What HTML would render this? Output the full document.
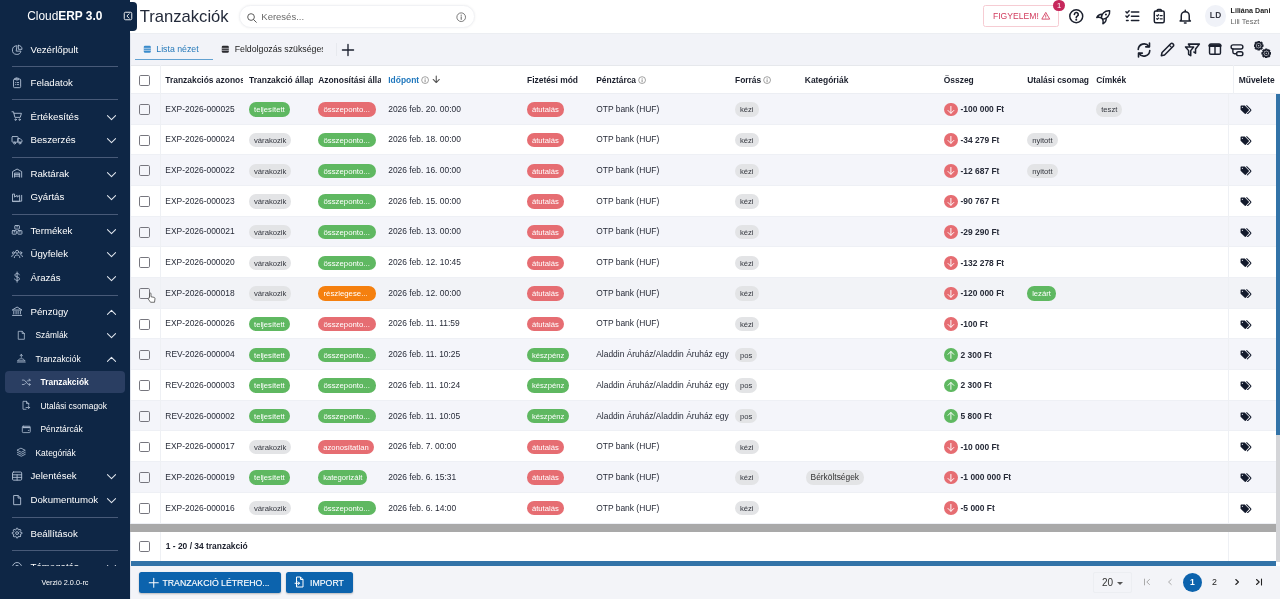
<!DOCTYPE html>
<html lang="hu"><head><meta charset="utf-8"><title>Tranzakciók</title>
<style>
*{box-sizing:border-box;margin:0;padding:0}
html,body{width:1280px;height:599px;overflow:hidden;background:#fff;font-family:"Liberation Sans",sans-serif;color:#222}
svg{display:block}
#app{position:absolute;left:0;top:0;width:1280px;height:599px;overflow:hidden;will-change:transform}
#side{position:absolute;left:0;top:0;width:129.500px;height:599px;background:#0e2645;overflow:hidden;color:#fff}
#side .logo{position:absolute;left:0;top:9.300px;width:129.500px;text-align:center;font-size:11.900px;color:#fff;letter-spacing:0}
#side .sl{position:absolute;white-space:nowrap;line-height:14px;color:#fff}
#side .ver{position:absolute;left:0;bottom:0;width:130px;height:33.500px;background:#0e2645;text-align:center;font-size:7.300px;line-height:33px;color:#fff}
#coll{position:absolute;left:120px;top:2px;width:17px;height:28.500px;background:#0e2645;border-radius:0 4px 4px 0;padding:9.200px 0 0 2.500px}
#head{position:absolute;left:130px;top:0;width:1150px;height:33px;background:#fff}
#head>*{position:absolute}
.title{left:9.800px;top:6.700px;font-size:16.600px;line-height:20px;color:#232a3a;white-space:nowrap}
.search{left:108.800px;top:4.900px;width:236.200px;height:23.300px;border-radius:12px;border:1px solid #f1f2f5;box-shadow:0 0 2.500px rgba(0,0,0,.055);background:#fff}
.search .ph{position:absolute;left:21.500px;top:4px;font-size:9.500px;line-height:13px;color:#6a6a6a}
.warn{left:853.200px;top:5.300px;width:75.800px;height:21.600px;border:1px solid #f6ccd3;border-radius:2.500px;color:#d23c5e;font-size:8.600px}
.warn span{position:absolute;left:8.800px;top:5px;line-height:10px;white-space:nowrap}
.badge{left:923.3000000000001px;top:-0.400px;width:11.800px;height:11.800px;border-radius:6px;background:#c6285c;color:#fff;font-size:7.600px;text-align:center;line-height:12px}
.avatar{left:1075.0px;top:5.400000000000002px;width:21.400px;height:21.400px;border-radius:50%;background:#f0f2f8;color:#383a45;font-size:8.300px;font-weight:bold;letter-spacing:0.300px;text-align:center;line-height:21.400px}
.uname{left:1100.6px;top:6px;font-size:7.100px;font-weight:bold;line-height:10px;color:#222;white-space:nowrap}
.urole{left:1100.6px;top:16.800px;font-size:7.500px;line-height:10px;color:#666;white-space:nowrap}
#tabs{position:absolute;left:130px;top:33px;width:1150px;height:32.300px;background:#f2f3f8;box-shadow:inset 0 1px 0 #eceef2}
#tabs>*{position:absolute}
.tab1{left:26.300px;top:9.500px;font-size:8.760px;line-height:13px;color:#2478b9;white-space:nowrap}
.tab2{left:104.700px;top:9.500px;width:88.300px;overflow:hidden;font-size:8.760px;line-height:13px;color:#222;white-space:nowrap}
.uline{left:4.600px;top:25.600px;width:78.400px;height:1.600px;background:#62a1d1}
#tbl{position:absolute;left:130px;top:65.3px;width:1150px;height:500.49999999999994px;background:#fff;overflow:hidden}
#tbl>*{position:absolute}
.row{left:0;width:1146.3px;height:30.68px;box-shadow:inset 0 -1px 0 #eef0f5}
.c,.h{white-space:nowrap;overflow:hidden;font-size:8.440px;line-height:14px;height:14px;color:#272b38}
.h{font-weight:bold;color:#1b1f2c}
.c{overflow:visible}
.c[style]{}
.cb{width:10.800px;height:10.800px;border:1.600px solid #76767e;border-radius:1.700px}
.vs{width:1px;background:#eef0f4}
.chip{display:inline-block;vertical-align:top;height:14.400px;line-height:15.400px;margin-top:0.500px;border-radius:7.200px;padding:0 4.950px;font-size:7.670px;white-space:nowrap}
.chip.ell{width:57.800px;padding:0 0 0 5.300px;font-size:7.800px;overflow:hidden}
.chip.big{font-size:8.400px;padding:0 4.700px;margin-left:1.100px}
.inf{display:inline-block;vertical-align:-0.900px;margin-left:1.800px}
.circ{display:inline-block;vertical-align:top;width:13.800px;height:13.800px;border-radius:50%;margin-top:0.800px}
.amt{display:inline-block;vertical-align:top;margin-left:3px;position:relative;top:0.500px}
#bot{position:absolute;left:130px;top:565.800px;width:1150px;height:33.200px;background:#f3f4f8}
#bot>*{position:absolute}
.btn{top:6.200px;height:21px;background:#0c63ad;border-radius:2.500px;color:#fff;font-size:8.720px;line-height:14px;white-space:nowrap;box-shadow:0 1px 2px rgba(0,0,0,.25);-webkit-text-stroke:0.120px #fff}
.psel{left:963.4000000000001px;top:5.800px;width:38.200px;height:21.400px;border:1px solid #eceef2;border-radius:2px}
.psel span{position:absolute;left:7.500px;top:4px;font-size:10px;line-height:12px;color:#333}
.psel i{position:absolute;left:23px;top:9px;border:3px solid transparent;border-top:3.500px solid #555;border-bottom:0}
.pg{top:11.700px}
.p1{left:1052.6499999999999px;top:7.050000000000045px;width:19.300px;height:19.300px;border-radius:50%;background:#0c63ad;color:#fff;font-size:8.500px;font-weight:bold;text-align:center;line-height:19.300px}
.p2{left:1078.5px;top:9.700000000000045px;width:12px;text-align:center;font-size:8.800px;line-height:14px;color:#222}
</style></head>
<body>
<div id="app">

<div id="head">
  <div class="title">Tranzakciók</div>
  <div class="search">
    <svg style="position:absolute;left:6.500px;top:5.800px" width="11.500" height="11.500" viewBox="0 0 24 24"><circle cx="10.500" cy="10.500" r="7" fill="none" stroke="#555" stroke-width="2"/><path d="M16 16l5.500 5.500" stroke="#555" stroke-width="2" stroke-linecap="round"/></svg>
    <span class="ph">Keresés...</span>
    <svg style="position:absolute;right:7.200px;top:6.300px" width="10.400" height="10.400" viewBox="0 0 24 24"><circle cx="12" cy="12" r="10" fill="none" stroke="#666" stroke-width="2"/><path d="M12 11v6" stroke="#666" stroke-width="2.400" stroke-linecap="round"/><circle cx="12" cy="7.300" r="1.400" fill="#666"/></svg>
  </div>
  <div class="warn"><span>FIGYELEM!</span>
    <svg style="position:absolute;left:57.300px;top:4.600px" width="9.500" height="9.500" viewBox="0 0 24 24"><path d="M12 3.500 22 20.500H2z" fill="none" stroke="#d23c5e" stroke-width="2.200" stroke-linejoin="round"/><path d="M12 10v5" stroke="#d23c5e" stroke-width="2.200" stroke-linecap="round"/><circle cx="12" cy="17.800" r="1.200" fill="#d23c5e"/></svg>
  </div>
  <div class="badge">1</div>
  <div style="position:absolute;left:937.55px;top:8.25px;width:16.5px;height:16.5px"><svg class="" width="16.5" height="16.5" viewBox="0 0 24 24" style=""><g fill="none" stroke="#1b202e" stroke-width="2.150" stroke-linecap="round" stroke-linejoin="round"><circle cx="12" cy="12" r="9.400"/><path d="M9.300 9.400a2.800 2.800 0 1 1 4.200 2.400c-1 .600-1.500 1.100-1.500 2.200" stroke-width="2.400"/></g><circle cx="12" cy="17.200" r="1.450" fill="#1b202e"/></svg></div>
  <div style="position:absolute;left:965.25px;top:8.55px;width:16.5px;height:16.5px"><svg class="" width="16.5" height="16.5" viewBox="0 0 24 24" style=""><g fill="none" stroke="#1b202e" stroke-width="2.150" stroke-linecap="round" stroke-linejoin="round"><path d="M21.300 2.700C14.500 1.800 8.800 7.500 9.300 12.900L11.100 14.700C16.500 15.200 22.200 9.500 21.300 2.700Z"/><path d="M10 7.700C6.500 7.600 4 9.600 2.600 12.500C5.500 11.800 7.800 12.200 9.300 12.900"/><path d="M16.300 14C16.400 17.500 14.400 20 11.500 21.400C12.200 18.500 11.800 16.200 11.100 14.700"/></g><circle cx="15.900" cy="8.100" r="1.500" fill="#1b202e"/></svg></div>
  <div style="position:absolute;left:994.05px;top:8.05px;width:16.5px;height:16.5px"><svg class="" width="16.5" height="16.5" viewBox="0 0 24 24" style=""><g fill="none" stroke="#1b202e" stroke-width="2.150" stroke-linecap="round" stroke-linejoin="round" stroke-width="2.500"><path d="M10.800 5.800H21.500M10.800 12H21.500M10.800 18.200H21.500"/><path d="M2.800 5.600l1.700 1.700 3-3.300M2.800 11.800l1.700 1.700 3-3.300" stroke-width="2.100"/><path d="M3.600 18.200h2.400"/></g></svg></div>
  <div style="position:absolute;left:1020.6500000000001px;top:8.350000000000001px;width:16.5px;height:16.5px"><svg class="" width="16.5" height="16.5" viewBox="0 0 24 24" style=""><g fill="none" stroke="#1b202e" stroke-width="2.150" stroke-linecap="round" stroke-linejoin="round"><rect x="4.800" y="4.200" width="14.400" height="17.300" rx="2.200"/><path d="M9 4.200V3.400a1.200 1.200 0 0 1 1.200-1.200h3.600A1.200 1.200 0 0 1 15 3.400v.800" /><path d="M8.300 10.800l1 1 1.700-2M13.300 11h3M8.300 15.600l1 1 1.700-2M13.300 15.800h3" stroke-width="1.800"/></g></svg></div>
  <div style="position:absolute;left:1046.85px;top:7.949999999999999px;width:16.5px;height:16.5px"><svg class="" width="16.5" height="16.5" viewBox="0 0 24 24" style=""><g fill="none" stroke="#1b202e" stroke-width="2.150" stroke-linecap="round" stroke-linejoin="round"><path d="M6.200 17.200V11.200a5.800 5.800 0 0 1 11.600 0v6l1.700 1.700H4.500z"/><path d="M12 3.200v2M10.800 21.700h2.400"/></g></svg></div>
  <div class="avatar">LD</div>
  <div class="uname">Liliána Dani</div>
  <div class="urole">Lili Teszt</div>
</div>


<div id="tabs">
  <div style="position:absolute;left:12.5px;top:12.0px;color:#3a8bcb"><svg class="" width="8.6" height="8.6" viewBox="0 0 24 24" style=""><rect x="2.200" y="2.200" width="19.600" height="19.600" rx="3.500" fill="currentColor"/><path d="M2 9.200h20M2 14.800h20" stroke="#f2f3f8" stroke-width="1.800" fill="none"/></svg></div>
  <div class="tab1">Lista nézet</div>
  <div class="uline"></div>
  <div style="position:absolute;left:90.9px;top:12.0px;color:#2a2a2e"><svg class="" width="8.6" height="8.6" viewBox="0 0 24 24" style=""><rect x="2.200" y="2.200" width="19.600" height="19.600" rx="3.500" fill="currentColor"/><path d="M2 9.200h20M2 14.800h20" stroke="#f2f3f8" stroke-width="1.800" fill="none"/></svg></div>
  <div class="tab2">Feldolgozás szükséges</div>
  <div style="position:absolute;left:205.800px;top:10px;width:1px;height:13px;background:#e7e9ee"></div>
  <svg style="position:absolute;left:211px;top:9.5px" width="14" height="14" viewBox="0 0 24 24"><path d="M12 2.500v19M2.500 12h19" stroke="#1b202e" stroke-width="2.300" stroke-linecap="round"/></svg>
  <div style="position:absolute;left:1004.7px;top:7.700000000000003px;width:18px;height:18px"><svg class="" width="18" height="18" viewBox="0 0 24 24" style=""><g fill="none" stroke="#1b202e" stroke-width="2.150" stroke-linecap="round" stroke-linejoin="round"><path d="M4.300 11.300A7.800 7.800 0 0 1 18.600 7.400M19.700 12.700A7.800 7.800 0 0 1 5.400 16.600"/><path d="M19.300 2.800v5h-5M4.700 21.200v-5h5"/></g></svg></div>
  <div style="position:absolute;left:1028.8px;top:8.200000000000003px;width:17px;height:17px"><svg class="" width="17" height="17" viewBox="0 0 24 24" style=""><g fill="none" stroke="#1b202e" stroke-width="2.150" stroke-linecap="round" stroke-linejoin="round"><path d="M16.600 3.900a2.100 2.100 0 0 1 3 0l.500.500a2.100 2.100 0 0 1 0 3L7.800 19.700 3.300 20.700l1-4.500z"/><path d="M14.600 6l3.400 3.400" stroke-width="1.600"/></g></svg></div>
  <div style="position:absolute;left:1053.5px;top:8.200000000000003px;width:17px;height:17px"><svg class="" width="17" height="17" viewBox="0 0 24 24" style=""><g fill="none" stroke="#1b202e" stroke-width="2.150" stroke-linecap="round" stroke-linejoin="round"><path d="M8.300 7.600 6.200 4.400H21.700L16.300 11.300V17.200L14 15.600"/><path d="M2.200 8.400H13.600L9.500 13.600V20.800L6.500 18.800V13.600Z"/></g></svg></div>
  <div style="position:absolute;left:1077.4px;top:8.399999999999999px;width:16px;height:16px"><svg class="" width="16" height="16" viewBox="0 0 24 24" style=""><g fill="none" stroke="#1b202e" stroke-width="2.150" stroke-linecap="round" stroke-linejoin="round"><rect x="3.800" y="4.600" width="16.400" height="15.400" rx="2"/><path d="M4 7h16" stroke-width="4"/><path d="M12 8.500V20"/></g></svg></div>
  <div style="position:absolute;left:1099.3px;top:8.5px;width:16px;height:16px"><svg class="" width="16" height="16" viewBox="0 0 24 24" style=""><g fill="none" stroke="#1b202e" stroke-width="2.150" stroke-linecap="round" stroke-linejoin="round"><rect x="3.200" y="4.300" width="17.600" height="6.200" rx="3"/><rect x="11.300" y="14.600" width="9.500" height="5.800" rx="2.900"/><path d="M5.800 10.500v4.500a2.500 2.500 0 0 0 2.500 2.500h3"/></g></svg></div>
  <div style="position:absolute;left:1123.5px;top:8.0px;width:17px;height:17px"><svg class="" width="17" height="17" viewBox="0 0 24 24" style=""><g fill="none" stroke="#1b202e" stroke-width="2.150" stroke-linecap="round" stroke-linejoin="round" stroke-width="1.350"><path d="M10.97 5.51L12.44 5.78L12.44 7.42L10.97 7.69L10.46 8.92L11.31 10.15L10.15 11.31L8.92 10.46L7.69 10.97L7.42 12.44L5.78 12.44L5.51 10.97L4.28 10.46L3.05 11.31L1.89 10.15L2.74 8.92L2.23 7.69L0.76 7.42L0.76 5.78L2.23 5.51L2.74 4.28L1.89 3.05L3.05 1.89L4.28 2.74L5.51 2.23L5.78 0.76L7.42 0.76L7.69 2.23L8.92 2.74L10.15 1.89L11.31 3.05L10.46 4.28Z"/><circle cx="6.600" cy="6.600" r="1.900"/><path d="M21.67 16.31L23.14 16.58L23.14 18.22L21.67 18.49L21.16 19.72L22.01 20.95L20.85 22.11L19.62 21.26L18.39 21.77L18.12 23.24L16.48 23.24L16.21 21.77L14.98 21.26L13.75 22.11L12.59 20.95L13.44 19.72L12.93 18.49L11.46 18.22L11.46 16.58L12.93 16.31L13.44 15.08L12.59 13.85L13.75 12.69L14.98 13.54L16.21 13.03L16.48 11.56L18.12 11.56L18.39 13.03L19.62 13.54L20.85 12.69L22.01 13.85L21.16 15.08Z"/><circle cx="17.300" cy="17.400" r="1.900"/></g></svg></div>
</div>

<div id="tbl"><div style="left:0;top:0;width:1150px;height:1px;background:#e6e8ec"></div><div class="cb" style="left:9px;top:9.45px"></div><div class="h" style="left:35.30px;top:7.70px;width:78.00px">Tranzakciós azonosító</div><div class="h" style="left:119.10px;top:7.70px;width:63.50px">Tranzakció állapot</div><div class="h" style="left:188.20px;top:7.70px;width:63.10px">Azonosítási állapot</div><div class="h" style="left:258.25px;top:7.70px;width:131.75px"><span style="color:#1f77bd">Időpont</span><svg class="inf" width="8.200" height="8.200" viewBox="0 0 24 24"><circle cx="12" cy="12" r="10" fill="none" stroke="#777" stroke-width="2"/><path d="M12 11v6" stroke="#777" stroke-width="2.400" stroke-linecap="round"/><circle cx="12" cy="7.300" r="1.400" fill="#777"/></svg><svg class="inf" style="margin-left:1.600px;vertical-align:-1.500px" width="10.500" height="10.500" viewBox="0 0 24 24"><path d="M12 4.500v14.500M5 12.500l7 7 7-7" fill="none" stroke="#555" stroke-width="2.500" stroke-linecap="round" stroke-linejoin="round"/></svg></div><div class="h" style="left:397.00px;top:7.70px;width:63.00px">Fizetési mód</div><div class="h" style="left:466.25px;top:7.70px;width:133.25px">Pénztárca<svg class="inf" width="8.200" height="8.200" viewBox="0 0 24 24"><circle cx="12" cy="12" r="10" fill="none" stroke="#777" stroke-width="2"/><path d="M12 11v6" stroke="#777" stroke-width="2.400" stroke-linecap="round"/><circle cx="12" cy="7.300" r="1.400" fill="#777"/></svg></div><div class="h" style="left:605.00px;top:7.70px;width:64.00px">Forrás<svg class="inf" width="8.200" height="8.200" viewBox="0 0 24 24"><circle cx="12" cy="12" r="10" fill="none" stroke="#777" stroke-width="2"/><path d="M12 11v6" stroke="#777" stroke-width="2.400" stroke-linecap="round"/><circle cx="12" cy="7.300" r="1.400" fill="#777"/></svg></div><div class="h" style="left:674.80px;top:7.70px;width:132.20px">Kategóriák</div><div class="h" style="left:813.75px;top:7.70px;width:77.25px">Összeg</div><div class="h" style="left:897.20px;top:7.70px;width:62.80px">Utalási csomag</div><div class="h" style="left:966.25px;top:7.70px;width:129.75px">Címkék</div><div class="h" style="left:1108.75px;top:7.70px;width:36px">Műveletek</div><div style="left:0;top:27.70px;width:1150px;height:1px;background:#eceef3"></div><div class="vs" style="left:30.400px;top:0;height:28.700000000000003px"></div><div class="vs" style="left:1102.5px;top:0;height:28.700000000000003px"></div><div class="row" style="top:28.70px;background:#f4f5fa"></div><div class="cb" style="left:9px;top:38.79px"></div><div class="c" style="left:35.30px;top:36.44px;width:78.00px">EXP-2026-000025</div><div class="c" style="left:119.10px;top:36.44px;width:63.50px"><span class="chip" style="background:#5fb861;color:#fff">teljesített</span></div><div class="c" style="left:188.20px;top:36.44px;width:63.10px"><span class="chip ell" style="background:#e66d72;color:#fff">összeponto...</span></div><div class="c" style="left:258.25px;top:36.44px;width:131.75px">2026 feb. 20. 00:00</div><div class="c" style="left:397.00px;top:36.44px;width:63.00px"><span class="chip" style="background:#e66d72;color:#fff">átutalás</span></div><div class="c" style="left:466.25px;top:36.44px;width:133.25px">OTP bank (HUF)</div><div class="c" style="left:605.00px;top:36.44px;width:64.00px"><span class="chip" style="background:#e3e4e6;color:#34373f">kézi</span></div><div class="c" style="left:813.75px;top:36.44px;width:77.25px"><span class="circ" style="background:#e66d72"><svg width="13.800" height="13.800" viewBox="0 0 24 24"><path d="M12 6v11.500M7 13l5 5 5-5" fill="none" stroke="#fff" stroke-width="1.700" stroke-linecap="round" stroke-linejoin="round"/></svg></span><b class="amt">-100 000 Ft</b></div><div class="c" style="left:966.25px;top:36.44px;width:129.75px"><span class="chip" style="background:#e3e4e6;color:#34373f">teszt</span></div><div style="position:absolute;left:1110.3px;top:39.54px;width:13px;height:10px"><svg width="12.400" height="9.400" viewBox="0 0 26 20"><path d="M1 2.500A1.500 1.500 0 0 1 2.500 1H10l8.500 8.500a1.400 1.400 0 0 1 0 2L12 18.500a1.400 1.400 0 0 1-2 0L1 10z" fill="#131a2c"/><circle cx="5" cy="5" r="1.400" fill="#dfe2ea"/><path d="M14 1.500l8.500 8.500a1.400 1.400 0 0 1 0 2L15.500 19" fill="none" stroke="#131a2c" stroke-width="2.200" stroke-linecap="round"/></svg></div><div class="row" style="top:59.38px;background:#fff"></div><div class="cb" style="left:9px;top:69.47px"></div><div class="c" style="left:35.30px;top:67.12px;width:78.00px">EXP-2026-000024</div><div class="c" style="left:119.10px;top:67.12px;width:63.50px"><span class="chip" style="background:#e3e4e6;color:#34373f">várakozik</span></div><div class="c" style="left:188.20px;top:67.12px;width:63.10px"><span class="chip ell" style="background:#5fb861;color:#fff">összeponto...</span></div><div class="c" style="left:258.25px;top:67.12px;width:131.75px">2026 feb. 18. 00:00</div><div class="c" style="left:397.00px;top:67.12px;width:63.00px"><span class="chip" style="background:#e66d72;color:#fff">átutalás</span></div><div class="c" style="left:466.25px;top:67.12px;width:133.25px">OTP bank (HUF)</div><div class="c" style="left:605.00px;top:67.12px;width:64.00px"><span class="chip" style="background:#e3e4e6;color:#34373f">kézi</span></div><div class="c" style="left:813.75px;top:67.12px;width:77.25px"><span class="circ" style="background:#e66d72"><svg width="13.800" height="13.800" viewBox="0 0 24 24"><path d="M12 6v11.500M7 13l5 5 5-5" fill="none" stroke="#fff" stroke-width="1.700" stroke-linecap="round" stroke-linejoin="round"/></svg></span><b class="amt">-34 279 Ft</b></div><div class="c" style="left:897.20px;top:67.12px;width:62.80px"><span class="chip" style="background:#e3e4e6;color:#34373f">nyitott</span></div><div style="position:absolute;left:1110.3px;top:70.22px;width:13px;height:10px"><svg width="12.400" height="9.400" viewBox="0 0 26 20"><path d="M1 2.500A1.500 1.500 0 0 1 2.500 1H10l8.500 8.500a1.400 1.400 0 0 1 0 2L12 18.500a1.400 1.400 0 0 1-2 0L1 10z" fill="#131a2c"/><circle cx="5" cy="5" r="1.400" fill="#dfe2ea"/><path d="M14 1.500l8.500 8.500a1.400 1.400 0 0 1 0 2L15.500 19" fill="none" stroke="#131a2c" stroke-width="2.200" stroke-linecap="round"/></svg></div><div class="row" style="top:90.06px;background:#f4f5fa"></div><div class="cb" style="left:9px;top:100.15px"></div><div class="c" style="left:35.30px;top:97.80px;width:78.00px">EXP-2026-000022</div><div class="c" style="left:119.10px;top:97.80px;width:63.50px"><span class="chip" style="background:#e3e4e6;color:#34373f">várakozik</span></div><div class="c" style="left:188.20px;top:97.80px;width:63.10px"><span class="chip ell" style="background:#5fb861;color:#fff">összeponto...</span></div><div class="c" style="left:258.25px;top:97.80px;width:131.75px">2026 feb. 16. 00:00</div><div class="c" style="left:397.00px;top:97.80px;width:63.00px"><span class="chip" style="background:#e66d72;color:#fff">átutalás</span></div><div class="c" style="left:466.25px;top:97.80px;width:133.25px">OTP bank (HUF)</div><div class="c" style="left:605.00px;top:97.80px;width:64.00px"><span class="chip" style="background:#e3e4e6;color:#34373f">kézi</span></div><div class="c" style="left:813.75px;top:97.80px;width:77.25px"><span class="circ" style="background:#e66d72"><svg width="13.800" height="13.800" viewBox="0 0 24 24"><path d="M12 6v11.500M7 13l5 5 5-5" fill="none" stroke="#fff" stroke-width="1.700" stroke-linecap="round" stroke-linejoin="round"/></svg></span><b class="amt">-12 687 Ft</b></div><div class="c" style="left:897.20px;top:97.80px;width:62.80px"><span class="chip" style="background:#e3e4e6;color:#34373f">nyitott</span></div><div style="position:absolute;left:1110.3px;top:100.90px;width:13px;height:10px"><svg width="12.400" height="9.400" viewBox="0 0 26 20"><path d="M1 2.500A1.500 1.500 0 0 1 2.500 1H10l8.500 8.500a1.400 1.400 0 0 1 0 2L12 18.500a1.400 1.400 0 0 1-2 0L1 10z" fill="#131a2c"/><circle cx="5" cy="5" r="1.400" fill="#dfe2ea"/><path d="M14 1.500l8.500 8.500a1.400 1.400 0 0 1 0 2L15.500 19" fill="none" stroke="#131a2c" stroke-width="2.200" stroke-linecap="round"/></svg></div><div class="row" style="top:120.74px;background:#fff"></div><div class="cb" style="left:9px;top:130.83px"></div><div class="c" style="left:35.30px;top:128.48px;width:78.00px">EXP-2026-000023</div><div class="c" style="left:119.10px;top:128.48px;width:63.50px"><span class="chip" style="background:#e3e4e6;color:#34373f">várakozik</span></div><div class="c" style="left:188.20px;top:128.48px;width:63.10px"><span class="chip ell" style="background:#5fb861;color:#fff">összeponto...</span></div><div class="c" style="left:258.25px;top:128.48px;width:131.75px">2026 feb. 15. 00:00</div><div class="c" style="left:397.00px;top:128.48px;width:63.00px"><span class="chip" style="background:#e66d72;color:#fff">átutalás</span></div><div class="c" style="left:466.25px;top:128.48px;width:133.25px">OTP bank (HUF)</div><div class="c" style="left:605.00px;top:128.48px;width:64.00px"><span class="chip" style="background:#e3e4e6;color:#34373f">kézi</span></div><div class="c" style="left:813.75px;top:128.48px;width:77.25px"><span class="circ" style="background:#e66d72"><svg width="13.800" height="13.800" viewBox="0 0 24 24"><path d="M12 6v11.500M7 13l5 5 5-5" fill="none" stroke="#fff" stroke-width="1.700" stroke-linecap="round" stroke-linejoin="round"/></svg></span><b class="amt">-90 767 Ft</b></div><div style="position:absolute;left:1110.3px;top:131.58px;width:13px;height:10px"><svg width="12.400" height="9.400" viewBox="0 0 26 20"><path d="M1 2.500A1.500 1.500 0 0 1 2.500 1H10l8.500 8.500a1.400 1.400 0 0 1 0 2L12 18.500a1.400 1.400 0 0 1-2 0L1 10z" fill="#131a2c"/><circle cx="5" cy="5" r="1.400" fill="#dfe2ea"/><path d="M14 1.500l8.500 8.500a1.400 1.400 0 0 1 0 2L15.500 19" fill="none" stroke="#131a2c" stroke-width="2.200" stroke-linecap="round"/></svg></div><div class="row" style="top:151.42px;background:#f4f5fa"></div><div class="cb" style="left:9px;top:161.51px"></div><div class="c" style="left:35.30px;top:159.16px;width:78.00px">EXP-2026-000021</div><div class="c" style="left:119.10px;top:159.16px;width:63.50px"><span class="chip" style="background:#e3e4e6;color:#34373f">várakozik</span></div><div class="c" style="left:188.20px;top:159.16px;width:63.10px"><span class="chip ell" style="background:#5fb861;color:#fff">összeponto...</span></div><div class="c" style="left:258.25px;top:159.16px;width:131.75px">2026 feb. 13. 00:00</div><div class="c" style="left:397.00px;top:159.16px;width:63.00px"><span class="chip" style="background:#e66d72;color:#fff">átutalás</span></div><div class="c" style="left:466.25px;top:159.16px;width:133.25px">OTP bank (HUF)</div><div class="c" style="left:605.00px;top:159.16px;width:64.00px"><span class="chip" style="background:#e3e4e6;color:#34373f">kézi</span></div><div class="c" style="left:813.75px;top:159.16px;width:77.25px"><span class="circ" style="background:#e66d72"><svg width="13.800" height="13.800" viewBox="0 0 24 24"><path d="M12 6v11.500M7 13l5 5 5-5" fill="none" stroke="#fff" stroke-width="1.700" stroke-linecap="round" stroke-linejoin="round"/></svg></span><b class="amt">-29 290 Ft</b></div><div style="position:absolute;left:1110.3px;top:162.26px;width:13px;height:10px"><svg width="12.400" height="9.400" viewBox="0 0 26 20"><path d="M1 2.500A1.500 1.500 0 0 1 2.500 1H10l8.500 8.500a1.400 1.400 0 0 1 0 2L12 18.500a1.400 1.400 0 0 1-2 0L1 10z" fill="#131a2c"/><circle cx="5" cy="5" r="1.400" fill="#dfe2ea"/><path d="M14 1.500l8.500 8.500a1.400 1.400 0 0 1 0 2L15.500 19" fill="none" stroke="#131a2c" stroke-width="2.200" stroke-linecap="round"/></svg></div><div class="row" style="top:182.10px;background:#fff"></div><div class="cb" style="left:9px;top:192.19px"></div><div class="c" style="left:35.30px;top:189.84px;width:78.00px">EXP-2026-000020</div><div class="c" style="left:119.10px;top:189.84px;width:63.50px"><span class="chip" style="background:#e3e4e6;color:#34373f">várakozik</span></div><div class="c" style="left:188.20px;top:189.84px;width:63.10px"><span class="chip ell" style="background:#5fb861;color:#fff">összeponto...</span></div><div class="c" style="left:258.25px;top:189.84px;width:131.75px">2026 feb. 12. 10:45</div><div class="c" style="left:397.00px;top:189.84px;width:63.00px"><span class="chip" style="background:#e66d72;color:#fff">átutalás</span></div><div class="c" style="left:466.25px;top:189.84px;width:133.25px">OTP bank (HUF)</div><div class="c" style="left:605.00px;top:189.84px;width:64.00px"><span class="chip" style="background:#e3e4e6;color:#34373f">kézi</span></div><div class="c" style="left:813.75px;top:189.84px;width:77.25px"><span class="circ" style="background:#e66d72"><svg width="13.800" height="13.800" viewBox="0 0 24 24"><path d="M12 6v11.500M7 13l5 5 5-5" fill="none" stroke="#fff" stroke-width="1.700" stroke-linecap="round" stroke-linejoin="round"/></svg></span><b class="amt">-132 278 Ft</b></div><div style="position:absolute;left:1110.3px;top:192.94px;width:13px;height:10px"><svg width="12.400" height="9.400" viewBox="0 0 26 20"><path d="M1 2.500A1.500 1.500 0 0 1 2.500 1H10l8.500 8.500a1.400 1.400 0 0 1 0 2L12 18.500a1.400 1.400 0 0 1-2 0L1 10z" fill="#131a2c"/><circle cx="5" cy="5" r="1.400" fill="#dfe2ea"/><path d="M14 1.500l8.500 8.500a1.400 1.400 0 0 1 0 2L15.500 19" fill="none" stroke="#131a2c" stroke-width="2.200" stroke-linecap="round"/></svg></div><div class="row" style="top:212.78px;background:#f2f3f7"></div><div class="cb" style="left:9px;top:222.87px"></div><div class="c" style="left:35.30px;top:220.52px;width:78.00px">EXP-2026-000018</div><div class="c" style="left:119.10px;top:220.52px;width:63.50px"><span class="chip" style="background:#e3e4e6;color:#34373f">várakozik</span></div><div class="c" style="left:188.20px;top:220.52px;width:63.10px"><span class="chip ell" style="background:#f5800f;color:#fff">részlegese...</span></div><div class="c" style="left:258.25px;top:220.52px;width:131.75px">2026 feb. 12. 00:00</div><div class="c" style="left:397.00px;top:220.52px;width:63.00px"><span class="chip" style="background:#e66d72;color:#fff">átutalás</span></div><div class="c" style="left:466.25px;top:220.52px;width:133.25px">OTP bank (HUF)</div><div class="c" style="left:605.00px;top:220.52px;width:64.00px"><span class="chip" style="background:#e3e4e6;color:#34373f">kézi</span></div><div class="c" style="left:813.75px;top:220.52px;width:77.25px"><span class="circ" style="background:#e66d72"><svg width="13.800" height="13.800" viewBox="0 0 24 24"><path d="M12 6v11.500M7 13l5 5 5-5" fill="none" stroke="#fff" stroke-width="1.700" stroke-linecap="round" stroke-linejoin="round"/></svg></span><b class="amt">-120 000 Ft</b></div><div class="c" style="left:897.20px;top:220.52px;width:62.80px"><span class="chip" style="background:#5fb861;color:#fff">lezárt</span></div><div style="position:absolute;left:1110.3px;top:223.62px;width:13px;height:10px"><svg width="12.400" height="9.400" viewBox="0 0 26 20"><path d="M1 2.500A1.500 1.500 0 0 1 2.500 1H10l8.500 8.500a1.400 1.400 0 0 1 0 2L12 18.500a1.400 1.400 0 0 1-2 0L1 10z" fill="#131a2c"/><circle cx="5" cy="5" r="1.400" fill="#dfe2ea"/><path d="M14 1.500l8.500 8.500a1.400 1.400 0 0 1 0 2L15.500 19" fill="none" stroke="#131a2c" stroke-width="2.200" stroke-linecap="round"/></svg></div><div class="row" style="top:243.46px;background:#fff"></div><div class="cb" style="left:9px;top:253.55px"></div><div class="c" style="left:35.30px;top:251.20px;width:78.00px">EXP-2026-000026</div><div class="c" style="left:119.10px;top:251.20px;width:63.50px"><span class="chip" style="background:#5fb861;color:#fff">teljesített</span></div><div class="c" style="left:188.20px;top:251.20px;width:63.10px"><span class="chip ell" style="background:#e66d72;color:#fff">összeponto...</span></div><div class="c" style="left:258.25px;top:251.20px;width:131.75px">2026 feb. 11. 11:59</div><div class="c" style="left:397.00px;top:251.20px;width:63.00px"><span class="chip" style="background:#e66d72;color:#fff">átutalás</span></div><div class="c" style="left:466.25px;top:251.20px;width:133.25px">OTP bank (HUF)</div><div class="c" style="left:605.00px;top:251.20px;width:64.00px"><span class="chip" style="background:#e3e4e6;color:#34373f">kézi</span></div><div class="c" style="left:813.75px;top:251.20px;width:77.25px"><span class="circ" style="background:#e66d72"><svg width="13.800" height="13.800" viewBox="0 0 24 24"><path d="M12 6v11.500M7 13l5 5 5-5" fill="none" stroke="#fff" stroke-width="1.700" stroke-linecap="round" stroke-linejoin="round"/></svg></span><b class="amt">-100 Ft</b></div><div style="position:absolute;left:1110.3px;top:254.30px;width:13px;height:10px"><svg width="12.400" height="9.400" viewBox="0 0 26 20"><path d="M1 2.500A1.500 1.500 0 0 1 2.500 1H10l8.500 8.500a1.400 1.400 0 0 1 0 2L12 18.500a1.400 1.400 0 0 1-2 0L1 10z" fill="#131a2c"/><circle cx="5" cy="5" r="1.400" fill="#dfe2ea"/><path d="M14 1.500l8.500 8.500a1.400 1.400 0 0 1 0 2L15.500 19" fill="none" stroke="#131a2c" stroke-width="2.200" stroke-linecap="round"/></svg></div><div class="row" style="top:274.14px;background:#f4f5fa"></div><div class="cb" style="left:9px;top:284.23px"></div><div class="c" style="left:35.30px;top:281.88px;width:78.00px">REV-2026-000004</div><div class="c" style="left:119.10px;top:281.88px;width:63.50px"><span class="chip" style="background:#5fb861;color:#fff">teljesített</span></div><div class="c" style="left:188.20px;top:281.88px;width:63.10px"><span class="chip ell" style="background:#5fb861;color:#fff">összeponto...</span></div><div class="c" style="left:258.25px;top:281.88px;width:131.75px">2026 feb. 11. 10:25</div><div class="c" style="left:397.00px;top:281.88px;width:63.00px"><span class="chip" style="background:#5fb861;color:#fff">készpénz</span></div><div class="c" style="left:466.25px;top:281.88px;width:133.25px">Aladdin Áruház/Aladdin Áruház egy</div><div class="c" style="left:605.00px;top:281.88px;width:64.00px"><span class="chip" style="background:#e3e4e6;color:#34373f">pos</span></div><div class="c" style="left:813.75px;top:281.88px;width:77.25px"><span class="circ" style="background:#5fb861"><svg width="13.800" height="13.800" viewBox="0 0 24 24"><path d="M12 18V6.500M7 11l5-5 5 5" fill="none" stroke="#fff" stroke-width="1.700" stroke-linecap="round" stroke-linejoin="round"/></svg></span><b class="amt">2 300 Ft</b></div><div style="position:absolute;left:1110.3px;top:284.98px;width:13px;height:10px"><svg width="12.400" height="9.400" viewBox="0 0 26 20"><path d="M1 2.500A1.500 1.500 0 0 1 2.500 1H10l8.500 8.500a1.400 1.400 0 0 1 0 2L12 18.500a1.400 1.400 0 0 1-2 0L1 10z" fill="#131a2c"/><circle cx="5" cy="5" r="1.400" fill="#dfe2ea"/><path d="M14 1.500l8.500 8.500a1.400 1.400 0 0 1 0 2L15.500 19" fill="none" stroke="#131a2c" stroke-width="2.200" stroke-linecap="round"/></svg></div><div class="row" style="top:304.82px;background:#fff"></div><div class="cb" style="left:9px;top:314.91px"></div><div class="c" style="left:35.30px;top:312.56px;width:78.00px">REV-2026-000003</div><div class="c" style="left:119.10px;top:312.56px;width:63.50px"><span class="chip" style="background:#5fb861;color:#fff">teljesített</span></div><div class="c" style="left:188.20px;top:312.56px;width:63.10px"><span class="chip ell" style="background:#5fb861;color:#fff">összeponto...</span></div><div class="c" style="left:258.25px;top:312.56px;width:131.75px">2026 feb. 11. 10:24</div><div class="c" style="left:397.00px;top:312.56px;width:63.00px"><span class="chip" style="background:#5fb861;color:#fff">készpénz</span></div><div class="c" style="left:466.25px;top:312.56px;width:133.25px">Aladdin Áruház/Aladdin Áruház egy</div><div class="c" style="left:605.00px;top:312.56px;width:64.00px"><span class="chip" style="background:#e3e4e6;color:#34373f">pos</span></div><div class="c" style="left:813.75px;top:312.56px;width:77.25px"><span class="circ" style="background:#5fb861"><svg width="13.800" height="13.800" viewBox="0 0 24 24"><path d="M12 18V6.500M7 11l5-5 5 5" fill="none" stroke="#fff" stroke-width="1.700" stroke-linecap="round" stroke-linejoin="round"/></svg></span><b class="amt">2 300 Ft</b></div><div style="position:absolute;left:1110.3px;top:315.66px;width:13px;height:10px"><svg width="12.400" height="9.400" viewBox="0 0 26 20"><path d="M1 2.500A1.500 1.500 0 0 1 2.500 1H10l8.500 8.500a1.400 1.400 0 0 1 0 2L12 18.500a1.400 1.400 0 0 1-2 0L1 10z" fill="#131a2c"/><circle cx="5" cy="5" r="1.400" fill="#dfe2ea"/><path d="M14 1.500l8.500 8.500a1.400 1.400 0 0 1 0 2L15.500 19" fill="none" stroke="#131a2c" stroke-width="2.200" stroke-linecap="round"/></svg></div><div class="row" style="top:335.50px;background:#f4f5fa"></div><div class="cb" style="left:9px;top:345.59px"></div><div class="c" style="left:35.30px;top:343.24px;width:78.00px">REV-2026-000002</div><div class="c" style="left:119.10px;top:343.24px;width:63.50px"><span class="chip" style="background:#5fb861;color:#fff">teljesített</span></div><div class="c" style="left:188.20px;top:343.24px;width:63.10px"><span class="chip ell" style="background:#5fb861;color:#fff">összeponto...</span></div><div class="c" style="left:258.25px;top:343.24px;width:131.75px">2026 feb. 11. 10:05</div><div class="c" style="left:397.00px;top:343.24px;width:63.00px"><span class="chip" style="background:#5fb861;color:#fff">készpénz</span></div><div class="c" style="left:466.25px;top:343.24px;width:133.25px">Aladdin Áruház/Aladdin Áruház egy</div><div class="c" style="left:605.00px;top:343.24px;width:64.00px"><span class="chip" style="background:#e3e4e6;color:#34373f">pos</span></div><div class="c" style="left:813.75px;top:343.24px;width:77.25px"><span class="circ" style="background:#5fb861"><svg width="13.800" height="13.800" viewBox="0 0 24 24"><path d="M12 18V6.500M7 11l5-5 5 5" fill="none" stroke="#fff" stroke-width="1.700" stroke-linecap="round" stroke-linejoin="round"/></svg></span><b class="amt">5 800 Ft</b></div><div style="position:absolute;left:1110.3px;top:346.34px;width:13px;height:10px"><svg width="12.400" height="9.400" viewBox="0 0 26 20"><path d="M1 2.500A1.500 1.500 0 0 1 2.500 1H10l8.500 8.500a1.400 1.400 0 0 1 0 2L12 18.500a1.400 1.400 0 0 1-2 0L1 10z" fill="#131a2c"/><circle cx="5" cy="5" r="1.400" fill="#dfe2ea"/><path d="M14 1.500l8.500 8.500a1.400 1.400 0 0 1 0 2L15.500 19" fill="none" stroke="#131a2c" stroke-width="2.200" stroke-linecap="round"/></svg></div><div class="row" style="top:366.18px;background:#fff"></div><div class="cb" style="left:9px;top:376.27px"></div><div class="c" style="left:35.30px;top:373.92px;width:78.00px">EXP-2026-000017</div><div class="c" style="left:119.10px;top:373.92px;width:63.50px"><span class="chip" style="background:#e3e4e6;color:#34373f">várakozik</span></div><div class="c" style="left:188.20px;top:373.92px;width:63.10px"><span class="chip" style="background:#e66d72;color:#fff">azonosítatlan</span></div><div class="c" style="left:258.25px;top:373.92px;width:131.75px">2026 feb. 7. 00:00</div><div class="c" style="left:397.00px;top:373.92px;width:63.00px"><span class="chip" style="background:#e66d72;color:#fff">átutalás</span></div><div class="c" style="left:466.25px;top:373.92px;width:133.25px">OTP bank (HUF)</div><div class="c" style="left:605.00px;top:373.92px;width:64.00px"><span class="chip" style="background:#e3e4e6;color:#34373f">kézi</span></div><div class="c" style="left:813.75px;top:373.92px;width:77.25px"><span class="circ" style="background:#e66d72"><svg width="13.800" height="13.800" viewBox="0 0 24 24"><path d="M12 6v11.500M7 13l5 5 5-5" fill="none" stroke="#fff" stroke-width="1.700" stroke-linecap="round" stroke-linejoin="round"/></svg></span><b class="amt">-10 000 Ft</b></div><div style="position:absolute;left:1110.3px;top:377.02px;width:13px;height:10px"><svg width="12.400" height="9.400" viewBox="0 0 26 20"><path d="M1 2.500A1.500 1.500 0 0 1 2.500 1H10l8.500 8.500a1.400 1.400 0 0 1 0 2L12 18.500a1.400 1.400 0 0 1-2 0L1 10z" fill="#131a2c"/><circle cx="5" cy="5" r="1.400" fill="#dfe2ea"/><path d="M14 1.500l8.500 8.500a1.400 1.400 0 0 1 0 2L15.500 19" fill="none" stroke="#131a2c" stroke-width="2.200" stroke-linecap="round"/></svg></div><div class="row" style="top:396.86px;background:#f4f5fa"></div><div class="cb" style="left:9px;top:406.95px"></div><div class="c" style="left:35.30px;top:404.60px;width:78.00px">EXP-2026-000019</div><div class="c" style="left:119.10px;top:404.60px;width:63.50px"><span class="chip" style="background:#5fb861;color:#fff">teljesített</span></div><div class="c" style="left:188.20px;top:404.60px;width:63.10px"><span class="chip" style="background:#5fb861;color:#fff">kategorizált</span></div><div class="c" style="left:258.25px;top:404.60px;width:131.75px">2026 feb. 6. 15:31</div><div class="c" style="left:397.00px;top:404.60px;width:63.00px"><span class="chip" style="background:#e66d72;color:#fff">átutalás</span></div><div class="c" style="left:466.25px;top:404.60px;width:133.25px">OTP bank (HUF)</div><div class="c" style="left:605.00px;top:404.60px;width:64.00px"><span class="chip" style="background:#e3e4e6;color:#34373f">kézi</span></div><div class="c" style="left:674.80px;top:404.60px;width:132.20px"><span class="chip big" style="background:#e3e4e6;color:#333">Bérköltségek</span></div><div class="c" style="left:813.75px;top:404.60px;width:77.25px"><span class="circ" style="background:#e66d72"><svg width="13.800" height="13.800" viewBox="0 0 24 24"><path d="M12 6v11.500M7 13l5 5 5-5" fill="none" stroke="#fff" stroke-width="1.700" stroke-linecap="round" stroke-linejoin="round"/></svg></span><b class="amt">-1 000 000 Ft</b></div><div style="position:absolute;left:1110.3px;top:407.70px;width:13px;height:10px"><svg width="12.400" height="9.400" viewBox="0 0 26 20"><path d="M1 2.500A1.500 1.500 0 0 1 2.500 1H10l8.500 8.500a1.400 1.400 0 0 1 0 2L12 18.500a1.400 1.400 0 0 1-2 0L1 10z" fill="#131a2c"/><circle cx="5" cy="5" r="1.400" fill="#dfe2ea"/><path d="M14 1.500l8.500 8.500a1.400 1.400 0 0 1 0 2L15.500 19" fill="none" stroke="#131a2c" stroke-width="2.200" stroke-linecap="round"/></svg></div><div class="row" style="top:427.54px;background:#fff"></div><div class="cb" style="left:9px;top:437.63px"></div><div class="c" style="left:35.30px;top:435.28px;width:78.00px">EXP-2026-000016</div><div class="c" style="left:119.10px;top:435.28px;width:63.50px"><span class="chip" style="background:#e3e4e6;color:#34373f">várakozik</span></div><div class="c" style="left:188.20px;top:435.28px;width:63.10px"><span class="chip ell" style="background:#5fb861;color:#fff">összeponto...</span></div><div class="c" style="left:258.25px;top:435.28px;width:131.75px">2026 feb. 6. 14:00</div><div class="c" style="left:397.00px;top:435.28px;width:63.00px"><span class="chip" style="background:#e66d72;color:#fff">átutalás</span></div><div class="c" style="left:466.25px;top:435.28px;width:133.25px">OTP bank (HUF)</div><div class="c" style="left:605.00px;top:435.28px;width:64.00px"><span class="chip" style="background:#e3e4e6;color:#34373f">kézi</span></div><div class="c" style="left:813.75px;top:435.28px;width:77.25px"><span class="circ" style="background:#e66d72"><svg width="13.800" height="13.800" viewBox="0 0 24 24"><path d="M12 6v11.500M7 13l5 5 5-5" fill="none" stroke="#fff" stroke-width="1.700" stroke-linecap="round" stroke-linejoin="round"/></svg></span><b class="amt">-5 000 Ft</b></div><div style="position:absolute;left:1110.3px;top:438.38px;width:13px;height:10px"><svg width="12.400" height="9.400" viewBox="0 0 26 20"><path d="M1 2.500A1.500 1.500 0 0 1 2.500 1H10l8.500 8.500a1.400 1.400 0 0 1 0 2L12 18.500a1.400 1.400 0 0 1-2 0L1 10z" fill="#131a2c"/><circle cx="5" cy="5" r="1.400" fill="#dfe2ea"/><path d="M14 1.500l8.500 8.500a1.400 1.400 0 0 1 0 2L15.500 19" fill="none" stroke="#131a2c" stroke-width="2.200" stroke-linecap="round"/></svg></div><div class="vs" style="left:30.400px;top:28.700000000000003px;height:467.5px"></div><div class="vs" style="left:1098.4px;top:28.700000000000003px;height:467.5px"></div><div style="position:absolute;left:0;top:458.3px;width:1145.8px;height:8.100px;background:#a9a9a9;z-index:3"></div><div class="cb" style="left:9px;top:475.95px"></div><div class="h" style="left:35.75px;top:474.20px;width:200px">1 - 20 / 34 tranzakció</div><div style="position:absolute;left:1145.8px;top:28.700000000000003px;width:4.200px;height:467.6px;background:#d4d5d8"></div><div style="position:absolute;left:1145.8px;top:29.200000000000003px;width:4.200px;height:340.3px;background:#3273a8"></div><div style="position:absolute;left:0;top:496.2px;width:1145.5px;height:4.300px;background:#3273a8"></div><svg style="position:absolute;left:17.30000000000001px;top:227.0px" width="9" height="11.500" viewBox="0 0 18 22"><path d="M5 10V3a1.500 1.500 0 0 1 3 0v6l6 1.200c1.200.300 2 1.200 2 2.500L15 20H7L2.500 13.500c-.800-1.200.700-2.500 1.800-1.500z" fill="#fff" stroke="#333" stroke-width="1.400" stroke-linejoin="round"/></svg></div>

<div id="bot">
  <div class="btn" style="left:9.200px;width:141.700px">
    <svg style="position:absolute;left:8.700px;top:4.700px" width="11.500" height="11.500" viewBox="0 0 24 24"><path d="M12 2.500v19M2.500 12h19" stroke="#fff" stroke-width="2.100" stroke-linecap="round"/></svg>
    <span style="position:absolute;left:23.300px;top:4px">TRANZAKCIÓ LÉTREHO...</span>
  </div>
  <div class="btn" style="left:155.600px;width:67.400px">
    <svg style="position:absolute;left:8.800px;top:4.500px" width="11" height="12" viewBox="0 0 22 24"><path d="M13 2H5v20h13V7z M13 2v5h5" fill="none" stroke="#fff" stroke-width="2" stroke-linejoin="round"/><path d="M2 14.500h9M8 11.500l3 3-3 3" fill="none" stroke="#fff" stroke-width="2" stroke-linecap="round" stroke-linejoin="round"/></svg>
    <span style="position:absolute;left:24.500px;top:4px">IMPORT</span>
  </div>
  <div class="psel"><span>20</span><i></i></div>
  <svg class="pg" style="left:1012px" width="10" height="10" viewBox="0 0 24 24"><path d="M6 5v14M18 6l-6.500 6 6.500 6" fill="none" stroke="#aaa" stroke-width="2.400" stroke-linecap="round" stroke-linejoin="round"/></svg>
  <svg class="pg" style="left:1035px" width="10" height="10" viewBox="0 0 24 24"><path d="M15 6l-6.500 6 6.500 6" fill="none" stroke="#aaa" stroke-width="2.400" stroke-linecap="round" stroke-linejoin="round"/></svg>
  <div class="p1">1</div>
  <div class="p2">2</div>
  <svg class="pg" style="left:1102px" width="10" height="10" viewBox="0 0 24 24"><path d="M9 6l6.500 6L9 18" fill="none" stroke="#222" stroke-width="2.600" stroke-linecap="round" stroke-linejoin="round"/></svg>
  <svg class="pg" style="left:1124px" width="10" height="10" viewBox="0 0 24 24"><path d="M18 5v14M6 6l6.500 6L6 18" fill="none" stroke="#222" stroke-width="2.600" stroke-linecap="round" stroke-linejoin="round"/></svg>
</div>

<div style="position:absolute;left:129.500px;top:33px;width:1.300px;height:566px;background:#e0e4ec"></div>

<div id="side">
  <div class="logo">Cloud<b>ERP 3.0</b></div>
  <div style="position:absolute;left:10.700000000000001px;top:43.5px;width:12.2px;height:12.2px;color:#a9b8cd"><svg class="" width="12.2" height="12.2" viewBox="0 0 24 24" style=""><g fill="none" stroke="currentColor" stroke-width="1.9" stroke-linecap="round" stroke-linejoin="round"><path d="M11 3.5a8.5 8.5 0 1 0 8.6 10.5H11z"/><path d="M14.5 2.8v7.7h7.2a7.6 7.6 0 0 0-7.2-7.7z"/></g></svg></div><div class="sl" style="left:30.5px;top:42.6px;font-size:9.66px;font-weight:normal">Vezérlőpult</div><div style="position:absolute;left:11.500px;top:66px;width:106px;height:1px;background:#485a78"></div><div style="position:absolute;left:10.700000000000001px;top:76.9px;width:12.2px;height:12.2px;color:#a9b8cd"><svg class="" width="12.2" height="12.2" viewBox="0 0 24 24" style=""><g fill="none" stroke="currentColor" stroke-width="1.9" stroke-linecap="round" stroke-linejoin="round"><rect x="5" y="4" width="14" height="17" rx="2"/><rect x="9" y="2.2" width="6" height="3.6" rx="1"/><path d="M9 11h0M12 11h3M9 15h0M12 15h3"/></g></svg></div><div class="sl" style="left:30.5px;top:76px;font-size:9.66px;font-weight:normal">Feladatok</div><div style="position:absolute;left:11.500px;top:99px;width:106px;height:1px;background:#485a78"></div><div style="position:absolute;left:10.700000000000001px;top:110.4px;width:12.2px;height:12.2px;color:#a9b8cd"><svg class="" width="12.2" height="12.2" viewBox="0 0 24 24" style=""><g fill="none" stroke="currentColor" stroke-width="1.9" stroke-linecap="round" stroke-linejoin="round"><path d="M2 3.5h3l2.6 11h10.6l2.3-8H6.2"/><circle cx="9" cy="19" r="1.4"/><circle cx="17" cy="19" r="1.4"/></g></svg></div><div class="sl" style="left:30.5px;top:109.5px;font-size:9.66px;font-weight:normal">Értékesítés</div><div style="position:absolute;left:104.7px;top:110.7px;width:13px;height:13px;color:#e1e6ee"><svg class="" width="13" height="13" viewBox="0 0 24 24" style=""><path d="M4.500 8.500l7.500 7.500 7.500-7.500" fill="none" stroke="currentColor" stroke-width="1.900" stroke-linecap="round" stroke-linejoin="round"/></svg></div><div style="position:absolute;left:10.700000000000001px;top:133.9px;width:12.2px;height:12.2px;color:#a9b8cd"><svg class="" width="12.2" height="12.2" viewBox="0 0 24 24" style=""><g fill="none" stroke="currentColor" stroke-width="1.9" stroke-linecap="round" stroke-linejoin="round"><rect x="2" y="5" width="12" height="11" rx="1.5"/><path d="M14 9h4l3.5 3.5V16H14z"/><circle cx="7" cy="18" r="1.8"/><circle cx="17.5" cy="18" r="1.8"/></g></svg></div><div class="sl" style="left:30.5px;top:133px;font-size:9.66px;font-weight:normal">Beszerzés</div><div style="position:absolute;left:104.7px;top:134.2px;width:13px;height:13px;color:#e1e6ee"><svg class="" width="13" height="13" viewBox="0 0 24 24" style=""><path d="M4.500 8.500l7.500 7.500 7.500-7.500" fill="none" stroke="currentColor" stroke-width="1.900" stroke-linecap="round" stroke-linejoin="round"/></svg></div><div style="position:absolute;left:11.500px;top:157px;width:106px;height:1px;background:#485a78"></div><div style="position:absolute;left:10.700000000000001px;top:167.4px;width:12.2px;height:12.2px;color:#a9b8cd"><svg class="" width="12.2" height="12.2" viewBox="0 0 24 24" style=""><g fill="none" stroke="currentColor" stroke-width="1.9" stroke-linecap="round" stroke-linejoin="round"><path d="M3 20V9l9-5 9 5v11"/><path d="M7 20v-8h10v8M7 15h10M7 18h10"/></g></svg></div><div class="sl" style="left:30.5px;top:166.5px;font-size:9.66px;font-weight:normal">Raktárak</div><div style="position:absolute;left:104.7px;top:167.7px;width:13px;height:13px;color:#e1e6ee"><svg class="" width="13" height="13" viewBox="0 0 24 24" style=""><path d="M4.500 8.500l7.500 7.500 7.500-7.500" fill="none" stroke="currentColor" stroke-width="1.900" stroke-linecap="round" stroke-linejoin="round"/></svg></div><div style="position:absolute;left:10.700000000000001px;top:190.9px;width:12.2px;height:12.2px;color:#a9b8cd"><svg class="" width="12.2" height="12.2" viewBox="0 0 24 24" style=""><g fill="none" stroke="currentColor" stroke-width="1.9" stroke-linecap="round" stroke-linejoin="round"><path d="M3 20V6h4v6l5-3.5V12l5-3.5V20z"/><path d="M3 20h18V8.5"/></g></svg></div><div class="sl" style="left:30.5px;top:190px;font-size:9.66px;font-weight:normal">Gyártás</div><div style="position:absolute;left:104.7px;top:191.2px;width:13px;height:13px;color:#e1e6ee"><svg class="" width="13" height="13" viewBox="0 0 24 24" style=""><path d="M4.500 8.500l7.500 7.500 7.500-7.500" fill="none" stroke="currentColor" stroke-width="1.900" stroke-linecap="round" stroke-linejoin="round"/></svg></div><div style="position:absolute;left:11.500px;top:213.5px;width:106px;height:1px;background:#485a78"></div><div style="position:absolute;left:10.700000000000001px;top:224.4px;width:12.2px;height:12.2px;color:#a9b8cd"><svg class="" width="12.2" height="12.2" viewBox="0 0 24 24" style=""><g fill="none" stroke="currentColor" stroke-width="1.9" stroke-linecap="round" stroke-linejoin="round"><rect x="7.5" y="3" width="9" height="7" rx="1"/><rect x="2.5" y="13" width="8" height="7" rx="1"/><rect x="13.5" y="13" width="8" height="7" rx="1"/><path d="M12 3v3M6.5 13v3M17.5 13v3"/></g></svg></div><div class="sl" style="left:30.5px;top:223.5px;font-size:9.66px;font-weight:normal">Termékek</div><div style="position:absolute;left:104.7px;top:224.7px;width:13px;height:13px;color:#e1e6ee"><svg class="" width="13" height="13" viewBox="0 0 24 24" style=""><path d="M4.500 8.500l7.500 7.500 7.500-7.500" fill="none" stroke="currentColor" stroke-width="1.900" stroke-linecap="round" stroke-linejoin="round"/></svg></div><div style="position:absolute;left:10.700000000000001px;top:247.9px;width:12.2px;height:12.2px;color:#a9b8cd"><svg class="" width="12.2" height="12.2" viewBox="0 0 24 24" style=""><g fill="none" stroke="currentColor" stroke-width="1.9" stroke-linecap="round" stroke-linejoin="round"><circle cx="12" cy="7.5" r="3"/><path d="M6.5 19c0-3.4 2.4-5.3 5.5-5.3s5.500 1.900 5.500 5.300"/><circle cx="4.800" cy="9.500" r="2"/><circle cx="19.200" cy="9.500" r="2"/><path d="M1.500 17c0-2 1.200-3.400 3.300-3.600M22.500 17c0-2-1.200-3.400-3.300-3.600"/></g></svg></div><div class="sl" style="left:30.5px;top:247px;font-size:9.66px;font-weight:normal">Ügyfelek</div><div style="position:absolute;left:104.7px;top:248.2px;width:13px;height:13px;color:#e1e6ee"><svg class="" width="13" height="13" viewBox="0 0 24 24" style=""><path d="M4.500 8.500l7.500 7.500 7.500-7.500" fill="none" stroke="currentColor" stroke-width="1.900" stroke-linecap="round" stroke-linejoin="round"/></svg></div><div style="position:absolute;left:10.700000000000001px;top:271.4px;width:12.2px;height:12.2px;color:#a9b8cd"><svg class="" width="12.2" height="12.2" viewBox="0 0 24 24" style=""><g fill="none" stroke="currentColor" stroke-width="1.9" stroke-linecap="round" stroke-linejoin="round"><path d="M16.500 7.500c-.6-1.700-2.300-2.600-4.500-2.600-2.600 0-4.300 1.300-4.300 3.300 0 4.700 9 2.300 9 7 0 2-1.800 3.400-4.600 3.400-2.500 0-4.300-1-4.900-2.900M12 2v20"/></g></svg></div><div class="sl" style="left:30.5px;top:270.5px;font-size:9.66px;font-weight:normal">Árazás</div><div style="position:absolute;left:104.7px;top:271.7px;width:13px;height:13px;color:#e1e6ee"><svg class="" width="13" height="13" viewBox="0 0 24 24" style=""><path d="M4.500 8.500l7.500 7.500 7.500-7.500" fill="none" stroke="currentColor" stroke-width="1.900" stroke-linecap="round" stroke-linejoin="round"/></svg></div><div style="position:absolute;left:11.500px;top:294.5px;width:106px;height:1px;background:#485a78"></div><div style="position:absolute;left:10.700000000000001px;top:305.4px;width:12.2px;height:12.2px;color:#a9b8cd"><svg class="" width="12.2" height="12.2" viewBox="0 0 24 24" style=""><g fill="none" stroke="currentColor" stroke-width="1.9" stroke-linecap="round" stroke-linejoin="round"><path d="M3 9.500 12 4l9 5.500z"/><path d="M5.500 12v5.500M10 12v5.500M14 12v5.500M18.500 12v5.500M3 20.500h18"/></g></svg></div><div class="sl" style="left:30.5px;top:304.5px;font-size:9.66px;font-weight:normal">Pénzügy</div><div style="position:absolute;left:104.7px;top:305.7px;width:13px;height:13px;color:#e1e6ee"><svg class="" width="13" height="13" viewBox="0 0 24 24" style=""><path d="M4.500 15.500l7.500-7.500 7.500 7.500" fill="none" stroke="currentColor" stroke-width="1.900" stroke-linecap="round" stroke-linejoin="round"/></svg></div><div style="position:absolute;left:16.4px;top:329.7px;width:10.6px;height:10.6px;color:#a9b8cd"><svg class="" width="10.6" height="10.6" viewBox="0 0 24 24" style=""><g fill="none" stroke="currentColor" stroke-width="1.9" stroke-linecap="round" stroke-linejoin="round"><path d="M6 3h8l5 5v13H6z"/><path d="M14 3v5h5"/></g></svg></div><div class="sl" style="left:35.5px;top:328px;font-size:8.44px;font-weight:normal">Számlák</div><div style="position:absolute;left:104.7px;top:329.2px;width:13px;height:13px;color:#e1e6ee"><svg class="" width="13" height="13" viewBox="0 0 24 24" style=""><path d="M4.500 8.500l7.500 7.500 7.500-7.500" fill="none" stroke="currentColor" stroke-width="1.900" stroke-linecap="round" stroke-linejoin="round"/></svg></div><div style="position:absolute;left:16.4px;top:353.2px;width:10.6px;height:10.6px;color:#a9b8cd"><svg class="" width="10.6" height="10.6" viewBox="0 0 24 24" style=""><g fill="none" stroke="currentColor" stroke-width="1.9" stroke-linecap="round" stroke-linejoin="round"><path d="M12 3v7M9.500 6 12 3l2.500 3"/><path d="M4 17c2-3 5-4 8-4s6 1 8 4z"/><path d="M3 20.500h18"/></g></svg></div><div class="sl" style="left:35.5px;top:351.5px;font-size:8.44px;font-weight:normal">Tranzakciók</div><div style="position:absolute;left:104.7px;top:352.7px;width:13px;height:13px;color:#e1e6ee"><svg class="" width="13" height="13" viewBox="0 0 24 24" style=""><path d="M4.500 15.500l7.500-7.500 7.500 7.500" fill="none" stroke="currentColor" stroke-width="1.900" stroke-linecap="round" stroke-linejoin="round"/></svg></div><div style="position:absolute;left:5px;top:370.5px;width:120px;height:22.500px;border-radius:4px;background:#2a3e62"></div><div style="position:absolute;left:20.7px;top:376.7px;width:10.6px;height:10.6px;color:#a9b8cd"><svg class="" width="10.6" height="10.6" viewBox="0 0 24 24" style=""><g fill="none" stroke="currentColor" stroke-width="1.9" stroke-linecap="round" stroke-linejoin="round"><path d="M3 7h4.500l9 10H21M3 17h4.500l2.500-2.800M14 9.800 16.500 7H21"/><path d="m18.500 4.500 2.500 2.500-2.500 2.500M18.500 14.500l2.500 2.500-2.500 2.500"/></g></svg></div><div class="sl" style="left:40.5px;top:375px;font-size:8.44px;font-weight:bold">Tranzakciók</div><div style="position:absolute;left:20.7px;top:400.2px;width:10.6px;height:10.6px;color:#a9b8cd"><svg class="" width="10.6" height="10.6" viewBox="0 0 24 24" style=""><g fill="none" stroke="currentColor" stroke-width="1.9" stroke-linecap="round" stroke-linejoin="round"><path d="M11.500 21H4.500V3h8l5 5v4"/><path d="M12.500 3v5h5"/><path d="M11.500 17h8M16.500 14l3 3-3 3"/></g></svg></div><div class="sl" style="left:40.5px;top:398.5px;font-size:8.44px;font-weight:normal">Utalási csomagok</div><div style="position:absolute;left:20.7px;top:423.7px;width:10.6px;height:10.6px;color:#a9b8cd"><svg class="" width="10.6" height="10.6" viewBox="0 0 24 24" style=""><g fill="none" stroke="currentColor" stroke-width="1.9" stroke-linecap="round" stroke-linejoin="round"><rect x="3" y="5" width="18" height="14.500" rx="2"/><path d="M3.500 7.800h17" stroke-width="3.200" stroke-linecap="butt"/><path d="M16.500 14.500h1.500"/></g></svg></div><div class="sl" style="left:40.5px;top:422px;font-size:8.44px;font-weight:normal">Pénztárcák</div><div style="position:absolute;left:16.4px;top:447.2px;width:10.6px;height:10.6px;color:#a9b8cd"><svg class="" width="10.6" height="10.6" viewBox="0 0 24 24" style=""><g fill="none" stroke="currentColor" stroke-width="1.9" stroke-linecap="round" stroke-linejoin="round"><path d="m12 3 9 4.500-9 4.500-9-4.500z"/><path d="m3 12 9 4.500 9-4.500M3 16.500 12 21l9-4.500"/></g></svg></div><div class="sl" style="left:35.5px;top:445.5px;font-size:8.44px;font-weight:normal">Kategóriák</div><div style="position:absolute;left:10.700000000000001px;top:469.9px;width:12.2px;height:12.2px;color:#a9b8cd"><svg class="" width="12.2" height="12.2" viewBox="0 0 24 24" style=""><g fill="none" stroke="currentColor" stroke-width="1.9" stroke-linecap="round" stroke-linejoin="round"><rect x="3" y="4" width="18" height="16" rx="2"/><path d="M3 9.500h18M3 14.500h18M12 9.500V20"/></g></svg></div><div class="sl" style="left:30.5px;top:469px;font-size:9.66px;font-weight:normal">Jelentések</div><div style="position:absolute;left:104.7px;top:470.2px;width:13px;height:13px;color:#e1e6ee"><svg class="" width="13" height="13" viewBox="0 0 24 24" style=""><path d="M4.500 8.500l7.500 7.500 7.500-7.500" fill="none" stroke="currentColor" stroke-width="1.900" stroke-linecap="round" stroke-linejoin="round"/></svg></div><div style="position:absolute;left:10.700000000000001px;top:493.9px;width:12.2px;height:12.2px;color:#a9b8cd"><svg class="" width="12.2" height="12.2" viewBox="0 0 24 24" style=""><g fill="none" stroke="currentColor" stroke-width="1.9" stroke-linecap="round" stroke-linejoin="round"><path d="M6 3h8l5 5v13H6z"/><path d="M14 3v5h5"/></g></svg></div><div class="sl" style="left:30.5px;top:493px;font-size:9.66px;font-weight:normal">Dokumentumok</div><div style="position:absolute;left:104.7px;top:494.2px;width:13px;height:13px;color:#e1e6ee"><svg class="" width="13" height="13" viewBox="0 0 24 24" style=""><path d="M4.500 8.500l7.500 7.500 7.500-7.500" fill="none" stroke="currentColor" stroke-width="1.900" stroke-linecap="round" stroke-linejoin="round"/></svg></div><div style="position:absolute;left:11.500px;top:516.5px;width:106px;height:1px;background:#485a78"></div><div style="position:absolute;left:10.700000000000001px;top:527.4px;width:12.2px;height:12.2px;color:#a9b8cd"><svg class="" width="12.2" height="12.2" viewBox="0 0 24 24" style=""><g fill="none" stroke="currentColor" stroke-width="1.9" stroke-linecap="round" stroke-linejoin="round"><circle cx="12" cy="12" r="2.800"/><path d="M18.99 10.26L21.51 10.66L21.51 13.34L18.99 13.74L18.17 15.71L19.67 17.78L17.78 19.67L15.71 18.17L13.74 18.99L13.34 21.51L10.66 21.51L10.26 18.99L8.29 18.17L6.22 19.67L4.33 17.78L5.83 15.71L5.01 13.74L2.49 13.34L2.49 10.66L5.01 10.26L5.83 8.29L4.33 6.22L6.22 4.33L8.29 5.83L10.26 5.01L10.66 2.49L13.34 2.49L13.74 5.01L15.71 5.83L17.78 4.33L19.67 6.22L18.17 8.29Z"/></g></svg></div><div class="sl" style="left:30.5px;top:526.5px;font-size:9.66px;font-weight:normal">Beállítások</div><div style="position:absolute;left:11.500px;top:550px;width:106px;height:1px;background:#485a78"></div><div style="position:absolute;left:10.700000000000001px;top:560.9px;width:12.2px;height:12.2px;color:#a9b8cd"><svg class="" width="12.2" height="12.2" viewBox="0 0 24 24" style=""><g fill="none" stroke="currentColor" stroke-width="1.9" stroke-linecap="round" stroke-linejoin="round"><circle cx="12" cy="12" r="9"/><circle cx="12" cy="12" r="3.500"/></g></svg></div><div class="sl" style="left:30.5px;top:560px;font-size:9.66px;font-weight:normal">Támogatás</div><div style="position:absolute;left:104.7px;top:561.2px;width:13px;height:13px;color:#e1e6ee"><svg class="" width="13" height="13" viewBox="0 0 24 24" style=""><path d="M4.500 8.500l7.500 7.500 7.500-7.500" fill="none" stroke="currentColor" stroke-width="1.900" stroke-linecap="round" stroke-linejoin="round"/></svg></div>
  <div class="ver">Verzió 2.0.0-rc</div>
</div>
<div id="coll"><svg width="10" height="10" viewBox="0 0 24 24"><rect x="3" y="3" width="18" height="18" rx="3" fill="none" stroke="#fff" stroke-width="2.200"/><path d="M14.500 6.800 9.300 12l5.200 5.200" fill="none" stroke="#fff" stroke-width="2.200" stroke-linecap="round" stroke-linejoin="round"/></svg></div>

</div>
</body></html>
